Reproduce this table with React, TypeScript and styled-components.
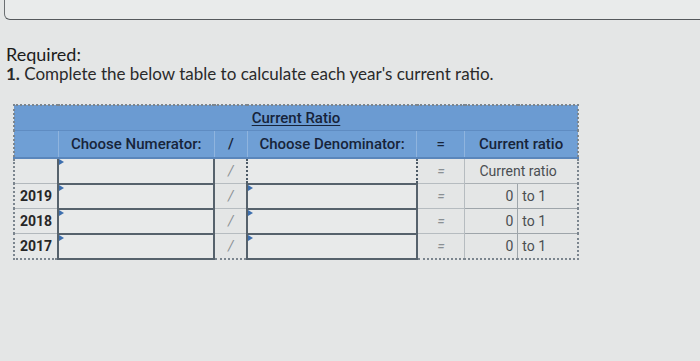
import { createGlobalStyle, styled } from "styled-components"

const GlobalStyle = createGlobalStyle`
  body {
    margin: 0;
    background: #e4e6e6;
    font-family: Lato, "Liberation Sans", sans-serif;
    color: #1f1f1f;
  }
`

type RowType = {
    year: string
}

const rows: RowType[] = [{ year: "2019" }, { year: "2018" }, { year: "2017" }]

export default function App() {
    return (
        <Page>
            <GlobalStyle />
            <TopBox />
            <Required>Required:</Required>
            <Task>
                <b>1.</b> Complete the below table to calculate each year's current ratio.
            </Task>
            <Table>
                <colgroup>
                    <col style={{ width: 44 }} />
                    <col style={{ width: 156 }} />
                    <col style={{ width: 33 }} />
                    <col style={{ width: 169 }} />
                    <col style={{ width: 48 }} />
                    <col style={{ width: 53 }} />
                    <col style={{ width: 60 }} />
                </colgroup>
                <thead>
                    <tr>
                        <Title colSpan={7}>
                            <u>Current Ratio</u>
                        </Title>
                    </tr>
                    <tr>
                        <Head />
                        <Head>Choose Numerator:</Head>
                        <Head>/</Head>
                        <Head>Choose Denominator:</Head>
                        <Head>=</Head>
                        <Head colSpan={2}>Current ratio</Head>
                    </tr>
                </thead>
                <tbody>
                    <tr>
                        <YearCell />
                        <InputCell>
                            <Flag />
                        </InputCell>
                        <SignCell>/</SignCell>
                        <InputCell $focused />
                        <SignCell>=</SignCell>
                        <RatioLabel colSpan={2}>Current ratio</RatioLabel>
                    </tr>
                    {rows.map(r => (
                        <tr key={r.year}>
                            <YearCell>{r.year}</YearCell>
                            <InputCell>
                                <Flag />
                            </InputCell>
                            <SignCell>/</SignCell>
                            <InputCell>
                                <Flag />
                            </InputCell>
                            <SignCell>=</SignCell>
                            <ValueCell $align="right">0</ValueCell>
                            <ValueCell $align="left">to 1</ValueCell>
                        </tr>
                    ))}
                </tbody>
            </Table>
        </Page>
    )
}

const Page = styled.div`
  width: 700px;
  height: 361px;
  overflow: hidden;
`

const TopBox = styled.div`
  margin-left: 4px;
  height: 19px;
  border-left: 1.5px solid #6b6f72;
  border-bottom: 1.5px solid #55595c;
  border-bottom-left-radius: 6px;
  background: #e9ebeb;
`

const Required = styled.div`
  margin: 25px 0 0 6px;
  font-size: 18px;
  line-height: 19px;
  color: #1c1c1c;
`

const Task = styled.div`
  margin: 0 0 0 6px;
  font-size: 17px;
  line-height: 19px;
  color: #2a2a2a;

  b {
    font-weight: 700;
  }
`

const Table = styled.table`
  margin: 21px 0 0 13px;
  border-collapse: collapse;
  table-layout: fixed;
  width: 566px;
  border: 2px dotted #7b858e;
  font-family: Roboto, "Liberation Sans", sans-serif;
  font-size: 15px;
`

const Title = styled.th`
  height: 24px;
  padding: 0;
  background: #6b9bd2;
  color: #16233a;
  font-weight: 500;
  text-align: center;
  border-bottom: 1px solid #5f8cc2;

  u {
    text-underline-offset: 2px;
  }
`

const Head = styled.th`
  height: 26px;
  padding: 0;
  background: #6f9fd5;
  color: #17243a;
  font-weight: 500;
  text-align: center;
  border-left: 1px solid #8fb4de;
  border-bottom: 2px solid #5a86bb;

  &:first-child {
    border-left: none;
  }
`

const YearCell = styled.td`
  height: 24px;
  padding: 0 0 0 5px;
  border-top: 1px solid #b2b8bc;
  font-weight: 700;
  font-size: 14px;
  color: #262626;
  background: #e6e8e8;
`

const InputCell = styled.td<{ $focused?: boolean }>`
  position: relative;
  padding: 0;
  background: #e8eaea;
  border: 2px ${props => (props.$focused ? "dotted #4c5a66" : "solid #56626c")};
  ${props => props.$focused && "border-top: none;"}
`

const Flag = styled.span`
  position: absolute;
  left: 0;
  top: 0;
  width: 0;
  height: 0;
  border-top: 3px solid transparent;
  border-bottom: 3px solid transparent;
  border-left: 5px solid #3d6fae;
`

const SignCell = styled.td`
  padding: 0;
  text-align: center;
  color: #8a9094;
  font-style: italic;
  font-size: 14px;
  border: 1px solid #b6bcc0;
`

const RatioLabel = styled.td`
  padding: 0 6px 0 0;
  text-align: center;
  color: #4a4e52;
  font-size: 14px;
  border: 1px solid #aab0b4;
`

const ValueCell = styled.td<{ $align: "left" | "right" }>`
  padding: 0 4px;
  text-align: ${props => props.$align};
  color: #4a4e52;
  font-size: 14px;
  border: 1px solid #9ea5aa;
`
